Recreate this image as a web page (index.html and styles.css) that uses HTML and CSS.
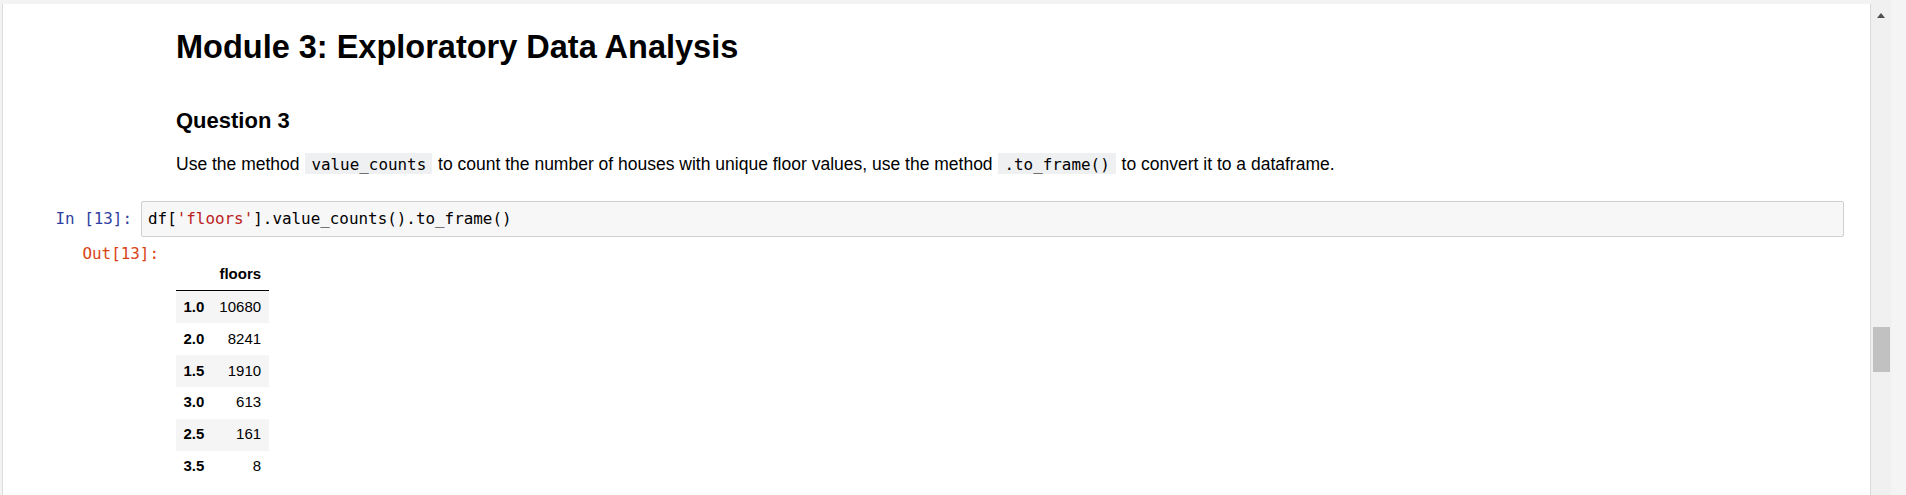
FILE: index.html
```html
<!DOCTYPE html>
<html lang="en">
<head>
<meta charset="utf-8">
<title>Module 3: Exploratory Data Analysis</title>
<link rel="stylesheet" href="styles.css">
</head>
<body>
<div class="app">
  <div class="main">
    <div class="notebook">
      <div class="cell text-cell h1-cell">
        <div class="prompt"></div>
        <div class="rendered"><h1>Module 3: Exploratory Data Analysis</h1></div>
      </div>
      <div class="cell text-cell h3-cell">
        <div class="prompt"></div>
        <div class="rendered"><h3>Question 3</h3></div>
      </div>
      <div class="cell text-cell p-cell">
        <div class="prompt"></div>
        <div class="rendered"><p>Use the method <code>value_counts</code> to count the number of houses with unique floor values, use the method <code>.to_frame()</code> to convert it to a dataframe.</p></div>
      </div>
      <div class="cell code-cell">
        <div class="prompt in-prompt">In&nbsp;[13]:</div>
        <div class="input-area"><span class="cm-var">df</span>[<span class="cm-str">'floors'</span>].value_counts().to_frame()</div>
      </div>
      <div class="cell output-cell">
        <div class="prompt out-prompt">Out[13]:</div>
        <div class="output-area">
          <table class="dataframe">
            <thead>
              <tr><th></th><th>floors</th></tr>
            </thead>
            <tbody>
              <tr><th>1.0</th><td>10680</td></tr>
              <tr><th>2.0</th><td>8241</td></tr>
              <tr><th>1.5</th><td>1910</td></tr>
              <tr><th>3.0</th><td>613</td></tr>
              <tr><th>2.5</th><td>161</td></tr>
              <tr><th>3.5</th><td>8</td></tr>
            </tbody>
          </table>
        </div>
      </div>
    </div>
  </div>
  <div class="scrollbar">
    <div class="track">
      <div class="arrow-up"></div>
      <div class="thumb"></div>
    </div>
    <div class="outer-strip"></div>
  </div>
</div>
</body>
</html>
```

FILE: styles.css
```css
html, body {
  margin: 0;
  padding: 0;
  height: 100%;
  overflow: hidden;
}

body {
  font-family: "Liberation Sans", Arial, sans-serif;
  color: #000;
  background: #f3f3f3;
}

.app {
  display: flex;
  height: 495px;
}

.main {
  flex: 1;
  display: flex;
  padding: 4px 0 0 2px;
  background: #f3f3f3;
  min-width: 0;
}

.notebook {
  flex: 1;
  background: #fff;
  border-left: 1px solid #dcdcdc;
  border-right: 1px solid #d9d9d9;
  display: flex;
  flex-direction: column;
  padding: 25px 26px 0 0;
  min-width: 0;
}

.cell {
  display: flex;
  align-items: flex-start;
}

.prompt {
  width: 138px;
  flex: none;
  box-sizing: border-box;
  text-align: right;
  font-family: "DejaVu Sans Mono", "Liberation Mono", monospace;
  font-size: 15.9px;
  line-height: 20px;
}

.rendered {
  flex: 1;
  padding-left: 35px;
}

h1 {
  margin: 0;
  font-size: 32.5px;
  line-height: 36px;
  font-weight: bold;
}

.h3-cell {
  margin-top: 43px;
}

h3 {
  margin: 0;
  font-size: 22px;
  line-height: 26px;
  font-weight: bold;
}

.p-cell {
  margin-top: 20px;
}

p {
  margin: 0;
  font-size: 17.5px;
  line-height: 20px;
}

code {
  font-family: "DejaVu Sans Mono", "Liberation Mono", monospace;
  font-size: 15.9px;
  line-height: 18px;
  background: #eff0f1;
  padding: 2px 6px 0;
  margin: 0 1px;
}

.code-cell {
  margin-top: 26.5px;
}

.in-prompt {
  color: #303f9f;
  padding: 8px 9px 0 0;
}

.input-area {
  flex: 1;
  background: #f7f7f7;
  border: 1px solid #cfcfcf;
  border-radius: 2px;
  padding: 7px 6px;
  font-family: "DejaVu Sans Mono", "Liberation Mono", monospace;
  font-size: 15.9px;
  line-height: 20px;
  color: #000;
}

.cm-str {
  color: #ba2121;
}

.output-cell {
  margin-top: 7.5px;
}

.out-prompt {
  width: 164px;
  color: #d84315;
  padding-right: 8px;
}

.output-area {
  flex: 1;
  padding: 14.5px 0 0 9px;
}

table.dataframe {
  border-collapse: collapse;
  border-spacing: 0;
  font-family: "Liberation Sans", Arial, sans-serif;
  font-size: 15px;
  color: #000;
}

.dataframe thead {
  border-bottom: 1px solid #000;
}

.dataframe th,
.dataframe td {
  padding: 7.5px;
  line-height: 16.85px;
  text-align: right;
  vertical-align: middle;
}

.dataframe th {
  font-weight: bold;
}

.dataframe td {
  font-weight: normal;
}

.dataframe tbody tr:nth-child(odd) {
  background: #f5f5f5;
}

.scrollbar {
  width: 35px;
  flex: none;
  display: flex;
}

.track {
  width: 20px;
  background: #f0f0f0;
  position: relative;
}

.outer-strip {
  flex: 1;
  background: #f4f4f4;
}

.arrow-up {
  position: absolute;
  left: 6px;
  top: 13px;
  width: 0;
  height: 0;
  border-left: 4.5px solid transparent;
  border-right: 4.5px solid transparent;
  border-bottom: 5px solid #505050;
}

.thumb {
  position: absolute;
  left: 2px;
  top: 327px;
  width: 17px;
  height: 45px;
  background: #c1c1c1;
}
```
